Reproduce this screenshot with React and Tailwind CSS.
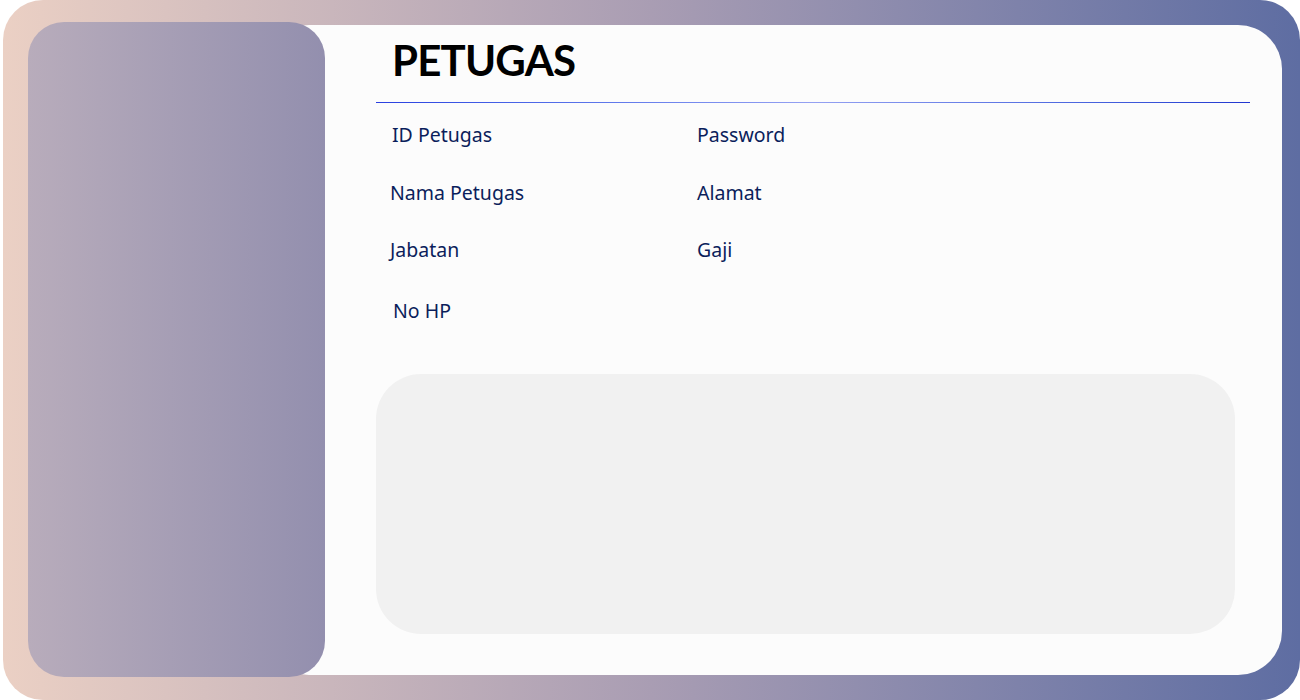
export default function App() {
  const label = "text-[19.5px] leading-[20px] h-[20px] text-[#0b1e5b] whitespace-nowrap";
  return (
    <div className="w-[1300px] h-[700px] bg-white" style={{ fontFamily: '"Noto Sans", sans-serif' }}>
      <div className="ml-[3px] w-[1297px] h-[700px] rounded-[40px] bg-gradient-to-r from-[#ebd0c4] via-[#a99db3] to-[#5e6da2] flex items-start pl-[25px] pr-[18px] pt-[22px]">
        <div className="relative z-10 w-[297px] h-[655px] shrink-0 rounded-[36px] bg-gradient-to-r from-[#b8acbb] to-[#938fae]" />
        <div className="-ml-[60px] mt-[3px] h-[650px] flex-1 rounded-[44px] bg-[#fcfcfc] pl-[111px] pr-[32px] pt-[14px] flex flex-col">
          <div
            className="ml-[16px] text-[42px] leading-[43px] h-[43px] font-bold text-black tracking-[-0.8px]"
            style={{ fontFamily: 'Lato, "Liberation Sans", sans-serif' }}
          >
            PETUGAS
          </div>
          <div className="mt-[20px] h-px w-[874px] bg-gradient-to-r from-[#2a3fe0] via-[#95a1f2] to-[#2236d0]" />
          <div className="mt-[22px] pl-[14px] grid grid-cols-[307px_1fr]">
            <div className={label + " ml-[2px]"}>ID Petugas</div>
            <div className={label}>Password</div>
            <div className={label + " mt-[38px]"}>Nama Petugas</div>
            <div className={label + " mt-[38px]"}>Alamat</div>
            <div className={label + " mt-[37px]"}>Jabatan</div>
            <div className={label + " mt-[37px]"}>Gaji</div>
            <div className={label + " mt-[41px] ml-[3px]"}>No HP</div>
            <div />
          </div>
          <div className="mt-[53px] w-[859px] h-[260px] rounded-[45px] bg-[#f1f1f1]" />
        </div>
      </div>
    </div>
  );
}
